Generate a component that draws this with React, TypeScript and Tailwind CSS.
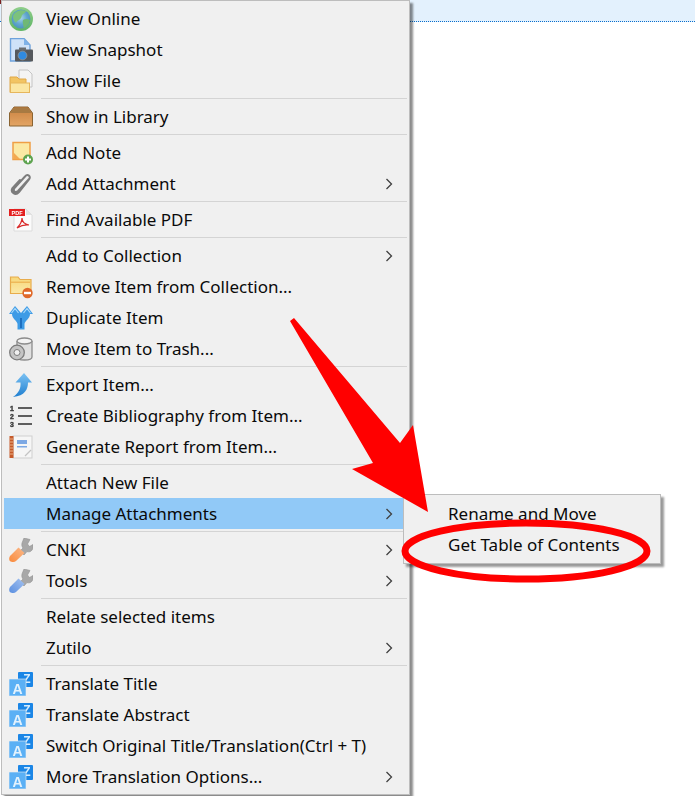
import React from "react";

const Globe = () => (
  <svg width="24" height="24" viewBox="0 0 24 24">
    <defs>
      <radialGradient id="gl" cx="48%" cy="45%" r="58%">
        <stop offset="0%" stopColor="#a9d6e8" />
        <stop offset="55%" stopColor="#63a8cf" />
        <stop offset="100%" stopColor="#4a90bd" />
      </radialGradient>
      <linearGradient id="gr" x1="0" y1="0" x2="0" y2="1">
        <stop offset="0%" stopColor="#8fce8a" />
        <stop offset="100%" stopColor="#5fb564" />
      </linearGradient>
    </defs>
    <circle cx="12" cy="12" r="12" fill="url(#gr)" />
    <circle cx="12" cy="12" r="9.4" fill="url(#gl)" />
    <path d="M4 9 C6 4 12 2 17 4 C16 7 13 6.5 12.5 10 C11 13.5 8 13 7 16 C5 14 4 12 4 9 Z" fill="#7cc27c" />
    <path d="M14 13 C16.5 11.5 20 12 21 13.5 C20 18 17 20.5 14.5 21 C15 18 13 16 14 13 Z" fill="#6fb874" />
  </svg>
);
const Snapshot = () => (
  <svg width="24" height="24" viewBox="0 0 24 24">
    <path d="M1.5 0.5 H15 L21 7 V23 H1.5 Z" fill="#cfe2f8" stroke="#6ea2dc" strokeWidth="1.4" />
    <path d="M15 0.5 V7 H21 Z" fill="#7fb2e8" />
    <rect x="6" y="11.5" width="18" height="12" rx="1" fill="#55585c" />
    <rect x="10" y="9.5" width="7" height="3" fill="#6a6d70" />
    <circle cx="13.5" cy="17.5" r="4.4" fill="#2f8ae0" stroke="#8f9396" strokeWidth="0.8" />
  </svg>
);
const ShowFile = () => (
  <svg width="24" height="24" viewBox="0 0 24 24">
    <path d="M10 1 H19 L23 5 V18 H10 Z" fill="#f4f4f4" stroke="#c4c4c4" />
    <path d="M1 8 H8 L10 10 H17 V23.5 H1 Z" fill="#f2c463" stroke="#e0a848" />
    <rect x="1.5" y="14" width="19" height="9.5" fill="#fbe6a2" stroke="#e6b65c" />
  </svg>
);
const Library = () => (
  <svg width="24" height="24" viewBox="0 0 24 24">
    <defs>
      <linearGradient id="lb" x1="0" y1="0" x2="0" y2="1">
        <stop offset="0%" stopColor="#c9813f" />
        <stop offset="100%" stopColor="#e3a565" />
      </linearGradient>
    </defs>
    <path d="M5 2 H19 L23.5 8 V21 H0.5 V8 Z" fill="url(#lb)" stroke="#8a6432" strokeWidth="1" />
    <path d="M1 8 L5 3 H19 L23 8 Z" fill="#a87a42" />
  </svg>
);
const AddNote = () => (
  <svg width="24" height="24" viewBox="0 0 24 24">
    <rect x="4" y="1.5" width="17" height="17" fill="#fbe9a4" stroke="#ef9f45" strokeWidth="1.5" />
    <path d="M4.5 18 V11.5 L11 18 Z" fill="#f3a950" />
    <circle cx="19" cy="18.5" r="5" fill="#5da34f" />
    <path d="M19 15.5 V21.5 M16 18.5 H22" stroke="#fff" strokeWidth="2" />
  </svg>
);
const Clip = () => (
  <svg width="24" height="24" viewBox="0 0 24 24">
    <path
      d="M20 7 L9 19 C6.5 21.5 3.5 19 5.5 16 L16 4.5 C18.5 1.5 22.5 4 20 7.5 L10 20 C6.5 24 1 20.5 3.5 16 L11 8"
      fill="none"
      stroke="#7c7c7c"
      strokeWidth="2"
      strokeLinecap="round"
    />
  </svg>
);
const Pdf = () => (
  <svg width="24" height="24" viewBox="0 0 24 24">
    <path d="M5 1 H17 L23 7 V23 H5 Z" fill="#fbfbfb" stroke="#dcdcdc" />
    <path d="M17 1 V7 H23 Z" fill="#e2e2e2" />
    <rect x="0" y="1" width="16" height="7" fill="#e32020" />
    <text x="8" y="6.8" textAnchor="middle" fontSize="5.5" fontWeight="700" fill="#fff" fontFamily="Liberation Sans, sans-serif">PDF</text>
    <path d="M8 20 C11 17 13 14 13 10 C13 14 15 16 20 17 C16 16.5 12 17.5 8 20 Z" fill="none" stroke="#d92a2a" strokeWidth="1.2" />
  </svg>
);
const RemoveFolder = () => (
  <svg width="24" height="24" viewBox="0 0 24 24">
    <defs>
      <linearGradient id="rf" x1="0" y1="0" x2="0" y2="1">
        <stop offset="0%" stopColor="#f7d779" />
        <stop offset="100%" stopColor="#fbe9a8" />
      </linearGradient>
    </defs>
    <path d="M1.5 2 H9 L11 4.5 H22 V18.5 H1.5 Z" fill="url(#rf)" stroke="#e8ac4c" strokeWidth="1.2" />
    <rect x="2" y="6.5" width="19" height="1.5" fill="#eeb95a" />
    <circle cx="18.5" cy="18" r="5.2" fill="#e0692a" />
    <rect x="15" y="16.8" width="7" height="2.4" fill="#fff" />
  </svg>
);
const Duplicate = () => (
  <svg width="24" height="24" viewBox="0 0 24 24">
    <path
      d="M8.5 23.5 H15.5 V18 C15.5 15 21 13 21 8 H24 L18 0 L12 7 L6 0 L0 8 H3 C3 13 8.5 15 8.5 18 Z"
      fill="#3d9be6"
    />
    <path d="M12 12 V22" stroke="#1d6fc0" strokeWidth="2" />
    <path d="M2.5 7 L6 2.5 L9.5 7 M14.5 7 L18 2.5 L21.5 7" stroke="#a8d8fa" strokeWidth="1.2" fill="none" />
  </svg>
);
const Trash = () => (
  <svg width="24" height="24" viewBox="0 0 24 24">
    <path d="M8 4 V20 C8 24 23 24 23 20 V4" fill="#e0e0e0" stroke="#8c8c8c" strokeWidth="1.3" />
    <ellipse cx="15.5" cy="4" rx="7.5" ry="3" fill="#f4f4f4" stroke="#8c8c8c" strokeWidth="1.3" />
    <circle cx="8" cy="15.5" r="7.3" fill="#c4c4c4" stroke="#7c7c7c" strokeWidth="1.3" />
    <circle cx="8" cy="15.5" r="3" fill="#f0f0f0" stroke="#7c7c7c" />
  </svg>
);
const ExportIcon = () => (
  <svg width="24" height="24" viewBox="0 0 24 24">
    <defs>
      <linearGradient id="ex" x1="0" y1="0" x2="0" y2="1">
        <stop offset="0%" stopColor="#7cc2f3" />
        <stop offset="100%" stopColor="#1f7fd0" />
      </linearGradient>
    </defs>
    <path d="M15 0 L23 9.5 H19 C19 16 16 23 4 24 C10 20 12 15 11.5 9.5 H6.5 Z" fill="url(#ex)" />
  </svg>
);
const Biblio = () => (
  <svg width="24" height="24" viewBox="0 0 24 24">
    <text x="1" y="7" fontSize="6.9" fontWeight="700" stroke="#3a3a3a" strokeWidth="0.4" fill="#3a3a3a" fontFamily="Liberation Sans, sans-serif">1</text>
    <text x="1" y="15" fontSize="6.9" fontWeight="700" stroke="#3a3a3a" strokeWidth="0.4" fill="#3a3a3a" fontFamily="Liberation Sans, sans-serif">2</text>
    <text x="1" y="23" fontSize="6.9" fontWeight="700" stroke="#3a3a3a" strokeWidth="0.4" fill="#3a3a3a" fontFamily="Liberation Sans, sans-serif">3</text>
    <path d="M9 4 H23 M9 12 H23 M9 20 H23" stroke="#5e5e5e" strokeWidth="1.8" />
  </svg>
);
const Report = () => (
  <svg width="24" height="24" viewBox="0 0 24 24">
    <rect x="4" y="1" width="19" height="22" fill="#f6f6f6" stroke="#cfcfcf" />
    <rect x="0.5" y="1" width="4" height="22" fill="#c65a2a" />
    <path d="M1 4 H4 M1 7 H4 M1 10 H4 M1 13 H4 M1 16 H4 M1 19 H4" stroke="#f3c8a0" strokeWidth="0.8" />
    <rect x="8" y="5" width="10" height="4" fill="#7ea9e4" />
    <rect x="8" y="11" width="10" height="1.5" fill="#7ea9e4" />
    <path d="M16 21 L22 15" stroke="#c4c4c4" strokeWidth="1.2" />
  </svg>
);
const Wrench = ({ a, b, id }: { a: string; b: string; id: string }) => (
  <svg width="24" height="24" viewBox="0 0 24 24">
    <defs>
      <linearGradient id={id} x1="0" y1="1" x2="1" y2="0">
        <stop offset="0%" stopColor={a} />
        <stop offset="100%" stopColor={b} />
      </linearGradient>
    </defs>
    <path d="M15 0 L13 5 C12.5 7 13 9 14 10 L11 13 L15 17 L18 13.5 C20 14.5 23 13.5 24 10 L24 6.5 L20.5 8.5 L18.5 6 L21 1.5 Z" fill="#a8a8a8" stroke="#909090" strokeWidth="0.6" />
    <path d="M9.5 9.5 L15.5 15 L7 23 C4.5 24.8 1.5 24 0.5 22.5 C-0.2 20.5 0.3 18.5 2 17 Z" fill={`url(#${id})`} />
  </svg>
);
const Translate = () => (
  <svg width="24" height="24" viewBox="0 0 24 24">
    <rect x="9" y="0" width="15" height="15" rx="1" fill="#1b86e6" />
    <text x="18" y="10.5" textAnchor="middle" fontSize="12" fontWeight="700" fill="#d5ecfd" fontFamily="Liberation Sans, sans-serif">Z</text>
    <rect x="0" y="7" width="17" height="17" rx="0.5" fill="#5bb0f5" stroke="#f0f0f0" strokeWidth="0.6" />
    <text x="8.5" y="21.5" textAnchor="middle" fontSize="14" fontWeight="700" fill="#e3f2fd" fontFamily="Liberation Sans, sans-serif">A</text>
  </svg>
);

const Chevron = () => (
  <svg width="8" height="12" viewBox="0 0 8 12" className="absolute right-[14px] top-[10px]">
    <path d="M1.5 1 L6.5 6 L1.5 11" fill="none" stroke="#404040" strokeWidth="1.3" />
  </svg>
);

type Row = { label: string; icon?: React.ReactNode; sub?: boolean; active?: boolean };

const groups: Row[][] = [
  [
    { label: "View Online", icon: <Globe /> },
    { label: "View Snapshot", icon: <Snapshot /> },
    { label: "Show File", icon: <ShowFile /> },
  ],
  [{ label: "Show in Library", icon: <Library /> }],
  [
    { label: "Add Note", icon: <AddNote /> },
    { label: "Add Attachment", icon: <Clip />, sub: true },
  ],
  [{ label: "Find Available PDF", icon: <Pdf /> }],
  [
    { label: "Add to Collection", sub: true },
    { label: "Remove Item from Collection...", icon: <RemoveFolder /> },
    { label: "Duplicate Item", icon: <Duplicate /> },
    { label: "Move Item to Trash...", icon: <Trash /> },
  ],
  [
    { label: "Export Item...", icon: <ExportIcon /> },
    { label: "Create Bibliography from Item...", icon: <Biblio /> },
    { label: "Generate Report from Item...", icon: <Report /> },
  ],
  [
    { label: "Attach New File" },
    { label: "Manage Attachments", sub: true, active: true },
  ],
  [
    { label: "CNKI", icon: <Wrench id="wo" a="#f98a3c" b="#fbb98a" />, sub: true },
    { label: "Tools", icon: <Wrench id="wb" a="#5b8fe0" b="#a5c3f0" />, sub: true },
  ],
  [
    { label: "Relate selected items" },
    { label: "Zutilo", sub: true },
  ],
  [
    { label: "Translate Title", icon: <Translate /> },
    { label: "Translate Abstract", icon: <Translate /> },
    { label: "Switch Original Title/Translation(Ctrl + T)", icon: <Translate /> },
    { label: "More Translation Options...", icon: <Translate />, sub: true },
  ],
];

const MenuRow = ({ row }: { row: Row }) => (
  <div className={`relative flex h-[31px] items-center ${row.active ? "bg-[#91c9f7]" : ""}`}>
    <span className="flex w-[42px] shrink-0 items-center pt-[1px] pl-[5px] blur-[0.5px]">{row.icon}</span>
    <span className="whitespace-nowrap">{row.label}</span>
    {row.sub && <Chevron />}
  </div>
);

export default function App() {
  return (
    <div
      className="relative flex h-[796px] w-[695px] items-start overflow-hidden bg-white text-[17px] leading-none text-[#0a0a0a]"
      style={{ fontFamily: '"Noto Sans", "Open Sans", sans-serif' }}
    >
      <div className="h-[22px] w-[1px] shrink-0 border-b border-dotted border-b-[#0a6ecb] bg-[#e3f1fd]">
        <div className="h-[4px] bg-[#7a1f1f]" />
      </div>

      <div className="relative z-10 w-[409px] shrink-0 border border-[#bdbdbd] bg-[#f0f0f0] px-[2px] pt-[2px] pb-[2px] shadow-[3px_3px_2px_rgba(0,0,0,0.45)]">
        {groups.map((g, i) => (
          <div key={i}>
            {i > 0 && (
              <div className="h-[5px] pt-[2px]">
                <div className="ml-[37px] h-[1px] bg-[#d4d4d4]" />
              </div>
            )}
            {g.map((r) => (
              <MenuRow key={r.label} row={r} />
            ))}
          </div>
        ))}
      </div>

      <div className="h-[22px] flex-1 border-b border-dotted border-b-[#0a6ecb] bg-[#e3f1fd]" />

      <div className="absolute left-[403px] top-[494px] z-20 w-[258px] border border-[#bdbdbd] bg-[#f0f0f0] px-[2px] py-[3px] shadow-[3px_3px_2px_rgba(0,0,0,0.4)]">
        <div className="flex h-[31px] items-center pl-[42px]">Rename and Move</div>
        <div className="flex h-[31px] items-center pl-[42px]">Get Table of Contents</div>
      </div>

      <svg className="pointer-events-none absolute left-0 top-0 z-30" width="695" height="796" viewBox="0 0 695 796">
        <polygon
          points="290,321 294,318 400,443 413,425 428,512 352,469 373,463"
          fill="#ff0000"
        />
        <ellipse cx="526" cy="551" rx="121" ry="28" fill="none" stroke="#ff0000" strokeWidth="7" />
      </svg>
    </div>
  );
}
